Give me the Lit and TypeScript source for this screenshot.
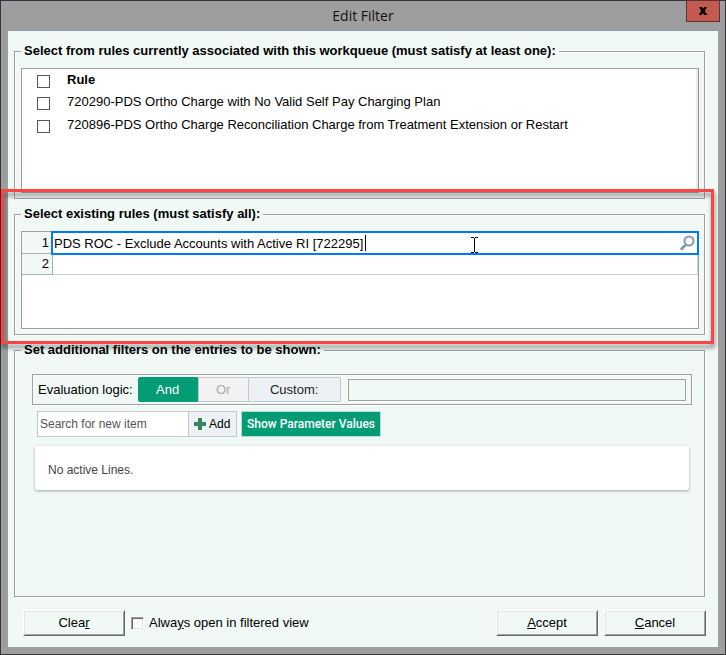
import { LitElement, html, css } from "lit";
import { customElement, state } from "lit/decorators.js";

interface Rule {
  id: string;
  name: string;
}

@customElement("app-root")
export class AppRoot extends LitElement {
  static styles = css`
    :host {
      display: block;
      font-family: "Liberation Sans", Arial, sans-serif;
      font-size: 13px;
      line-height: 16px;
      color: #000;
    }
    * {
      box-sizing: border-box;
    }
    button,
    input {
      font: inherit;
      color: inherit;
      border-radius: 0;
      margin: 0;
    }
    .window {
      display: flex;
      flex-direction: column;
      min-height: 100vh;
      padding: 0 7px 7px;
      border: 1px solid #35343b;
      background: #9e9e9e;
    }
    .titlebar {
      position: relative;
      height: 30px;
      border-bottom: 1px solid #8c9bb0;
    }
    .title {
      margin: 0;
      padding-top: 5px;
      text-align: center;
      font: 14px/20px "Open Sans", "Noto Sans", sans-serif;
      color: #111;
    }
    .close {
      position: absolute;
      top: -1px;
      right: -2px;
      display: flex;
      align-items: center;
      justify-content: center;
      width: 34px;
      height: 22px;
      padding: 0;
      border: 1px solid #5c3434;
      background: #c55a50;
    }
    .body {
      flex: 1;
      display: flex;
      flex-direction: column;
      gap: 7px;
      padding: 12px 13px 11px 6px;
      background: #f0f9f6;
    }
    fieldset {
      min-width: 0;
      margin: 0;
      padding: 9px 5px 5px 6px;
      border: 1px solid #a0a0a0;
      box-shadow: 1px 1px 0 #fff, inset 1px 1px 0 #fff;
    }
    legend {
      margin: 0;
      padding: 0 3px;
      background: #f0f9f6;
      font-weight: bold;
      line-height: 16px;
    }
    .panel {
      background: #fff;
      border: 1px solid #a0a0a0;
    }
    .rules {
      height: 125px;
      padding-left: 15px;
      border-right-color: #8f8f8f;
      box-shadow: inset -2px 0 0 #ececec;
    }
    table {
      border-collapse: separate;
      border-spacing: 0;
    }
    .rules td,
    .rules th {
      height: 23px;
      padding: 0;
      text-align: left;
      vertical-align: top;
    }
    .rules thead th {
      height: 22px;
    }
    .rules .tick {
      width: 30px;
      padding-top: 6px;
    }
    .rules .text {
      padding-top: 3px;
    }
    .box {
      appearance: none;
      display: block;
      width: 13px;
      height: 13px;
      border: 1px solid #555;
      background: #fff;
    }
    .callout {
      position: relative;
    }
    .callout::after {
      content: "";
      position: absolute;
      inset: -17px -9px -9px -13px;
      border: 3px solid #ff4242;
      filter: drop-shadow(1px 4px 2px rgba(0, 0, 0, 0.45));
      pointer-events: none;
    }
    .grid {
      height: 98px;
    }
    .grid table {
      width: 100%;
      table-layout: fixed;
    }
    .grid th {
      width: 31px;
      height: 22px;
      padding: 0 3px 0 0;
      border-right: 1px solid #a9b2af;
      border-bottom: 1px solid #a9b2af;
      background: #f0f9f6;
      font-weight: normal;
      text-align: right;
    }
    .grid td {
      position: relative;
      height: 21px;
      padding: 0;
      border-bottom: 1px solid #cdd3d1;
      border-right: 1px solid #cdd3d1;
    }
    .grid tr + tr th {
      height: 21px;
    }
    .cell {
      display: block;
      width: 100%;
      height: 20px;
      padding: 0 1px;
      border: 0;
      outline: none;
      background: transparent;
    }
    .active {
      position: absolute;
      inset: -1px -2px -2px -2px;
      z-index: 1;
      display: flex;
      align-items: center;
      border: 2px solid #0078ff;
      background: #fff;
    }
    .caret {
      position: absolute;
      left: 312px;
      top: 2px;
      width: 1px;
      height: 16px;
      background: #000;
    }
    .pointer {
      position: absolute;
      left: 418px;
      top: 4px;
    }
    .lookup {
      flex: none;
      display: flex;
      padding: 0 2px 0 0;
      border: 0;
      background: none;
    }
    .filters {
      flex: 1;
      padding: 16px 12px 16px 17px;
    }
    .filters legend {
      margin-left: -11px;
    }
    .logic {
      display: flex;
      align-items: center;
      height: 31px;
      padding: 0 5px;
      border: 1px solid #a0a0a0;
      box-shadow: 1px 1px 0 #fff, inset 1px 1px 0 #fff;
    }
    .segments {
      display: flex;
      margin: 0 7px 0 5px;
    }
    .segment {
      height: 25px;
      padding: 0;
      border: 1px solid #c3c8cc;
      background: #edf1f5;
      color: #222;
    }
    .and {
      width: 60px;
      border-color: #039c75;
      border-radius: 2px 0 0 2px;
      background: #039c75;
      color: #fff;
    }
    .or {
      width: 51px;
      background: #f2f2f2;
      color: #aaa;
    }
    .custom {
      width: 93px;
      margin-left: -1px;
      border-radius: 0 2px 2px 0;
    }
    .expression {
      flex: 1;
      min-width: 0;
      height: 22px;
      border: 1px solid #a0a0a0;
      background: #f0f9f6;
      box-shadow: 0 0 0 1px #fff;
    }
    .tools {
      display: flex;
      margin: 6px 0 9px 5px;
      font-size: 12px;
    }
    .search {
      width: 152px;
      height: 26px;
      padding: 0 2px;
      border: 1px solid #c3c8cc;
      background: #fff;
    }
    .search::placeholder {
      color: #555;
      opacity: 1;
    }
    .add {
      display: flex;
      align-items: center;
      gap: 3px;
      width: 49px;
      height: 26px;
      margin-left: -1px;
      padding: 0 5px;
      border: 1px solid #c3c8cc;
      background: #edf1f5;
    }
    .show {
      height: 26px;
      margin-left: 4px;
      padding: 0 5px;
      border: 1px solid #b9dcd2;
      background: #039c75;
      color: #fff;
      white-space: nowrap;
      font-family: Roboto, sans-serif;
      font-weight: 500;
    }
    .empty {
      margin: 0 3px;
      padding: 16px 13px 12px;
      background: #fff;
      border-radius: 2px;
      box-shadow: 0 1px 3px rgba(0, 0, 0, 0.35);
      font-size: 12px;
      color: #444;
    }
    .footer {
      display: flex;
      align-items: center;
      gap: 6px;
      padding: 6px 0 0 9px;
      margin-right: -1px;
    }
    .push {
      width: 102px;
      height: 26px;
      padding: 0;
      background: #f0f9f6;
      border: 1px solid;
      border-color: #fff #696969 #696969 #fff;
      box-shadow: inset 1px 1px 0 #e3e3e3, inset -1px -1px 0 #a0a0a0;
    }
    .always {
      display: flex;
      align-items: center;
      gap: 5px;
      margin-right: auto;
    }
    .sunken {
      appearance: none;
      width: 13px;
      height: 13px;
      border: 1px solid;
      border-color: #a0a0a0 #fff #fff #a0a0a0;
      background: #fff;
      box-shadow: inset 1px 1px 0 #696969, inset -1px -1px 0 #e3e3e3;
    }
  `;

  @state() private rules: Rule[] = [
    { id: "720290", name: "PDS Ortho Charge with No Valid Self Pay Charging Plan" },
    { id: "720896", name: "PDS Ortho Charge Reconciliation Charge from Treatment Extension or Restart" },
  ];

  render() {
    return html`
      <main class="window">
        <header class="titlebar">
          <h1 class="title">Edit Filter</h1>
          <button class="close" aria-label="Close">
            <svg width="10" height="8" viewBox="0 0 10 8">
              <path d="M1 0h3l1 2 1-2h3L6.700 4 9.500 8H6.300L5 6 3.700 8H.5L3.300 4z" fill="#000" />
            </svg>
          </button>
        </header>
        <div class="body">
          <fieldset>
            <legend>Select from rules currently associated with this workqueue (must satisfy at least one):</legend>
            <div class="panel rules">
              <table>
                <thead>
                  <tr>
                    <th class="tick"><input class="box" type="checkbox" aria-label="Select all rules" /></th>
                    <th class="text">Rule</th>
                  </tr>
                </thead>
                <tbody>
                  ${this.rules.map(
                    (rule) => html`<tr>
                      <td class="tick"><input class="box" type="checkbox" id="rule-${rule.id}" /></td>
                      <td class="text"><label for="rule-${rule.id}">${rule.id}-${rule.name}</label></td>
                    </tr>`
                  )}
                </tbody>
              </table>
            </div>
          </fieldset>

          <div class="callout">
            <fieldset>
              <legend>Select existing rules (must satisfy all):</legend>
              <div class="panel grid">
                <table>
                  <tr>
                    <th scope="row">1</th>
                    <td>
                      <div class="active">
                        <input class="cell" aria-label="Rule 1" value="PDS ROC - Exclude Accounts with Active RI [722295]" />
                        <span class="caret"></span>
                        <svg class="pointer" width="7" height="16" viewBox="0 0 7 16">
                          <path d="M0 .5h3M4 .5h3M3.500 1v14M0 15.500h3M4 15.500h3" stroke="#000" fill="none" />
                        </svg>
                        <button class="lookup" aria-label="Look up rule">
                          <svg width="15" height="16" viewBox="0 0 15 16">
                            <circle cx="9" cy="6" r="4.500" fill="none" stroke="#8299ae" stroke-width="2" />
                            <path d="M6 9.500L4.500 11" stroke="#8299ae" stroke-width="1.500" />
                            <path d="M4.500 11L1.800 13.700" stroke="#8299ae" stroke-width="3" stroke-linecap="round" />
                          </svg>
                        </button>
                      </div>
                    </td>
                  </tr>
                  <tr>
                    <th scope="row">2</th>
                    <td><input class="cell" aria-label="Rule 2" /></td>
                  </tr>
                </table>
              </div>
            </fieldset>
          </div>

          <fieldset class="filters">
            <legend>Set additional filters on the entries to be shown:</legend>
            <div class="logic" role="group" aria-labelledby="logic-label">
              <span id="logic-label">Evaluation logic:</span>
              <div class="segments">
                <button class="segment and" aria-pressed="true">And</button>
                <button class="segment or" disabled>Or</button>
                <button class="segment custom">Custom:</button>
              </div>
              <input class="expression" aria-label="Custom logic" />
            </div>
            <div class="tools">
              <input class="search" placeholder="Search for new item" aria-label="Search for new item" />
              <button class="add">
                <svg width="12" height="12" viewBox="0 0 12 12">
                  <path d="M4 0h4v4h4v4H8v4H4V8H0V4h4z" fill="#37865f" />
                </svg>
                Add
              </button>
              <button class="show">Show Parameter Values</button>
            </div>
            <div class="empty">No active Lines.</div>
          </fieldset>

          <footer class="footer">
            <button class="push">Clea<u>r</u></button>
            <label class="always"><input class="sunken" type="checkbox" /><span>Alwa<u>y</u>s open in filtered view</span></label>
            <button class="push"><u>A</u>ccept</button>
            <button class="push"><u>C</u>ancel</button>
          </footer>
        </div>
      </main>
    `;
  }
}
